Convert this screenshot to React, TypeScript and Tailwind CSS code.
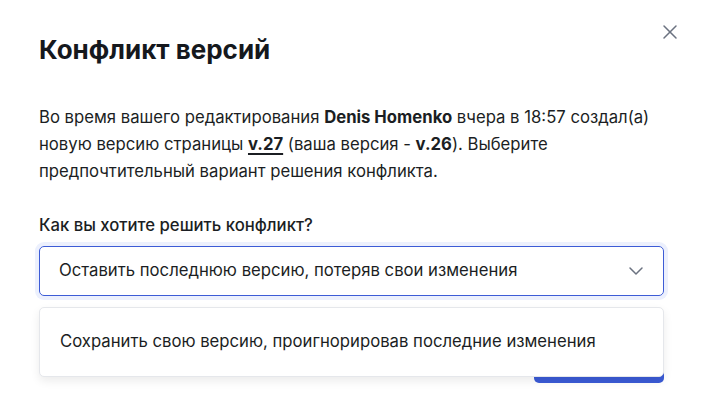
import * as React from "react"
import { X, ChevronDown } from "lucide-react"

export default function App() {
  return (
    <div className="relative w-[706px] h-[414px] overflow-hidden bg-white font-['Inter',sans-serif] text-[#1b1e23]">
      <button type="button" className="absolute top-[20px] right-[24px] text-[#6b7280]">
        <X size={24} strokeWidth={1.5} />
      </button>

      <div className="pl-[39px] pr-[42px] pt-[34px]">
        {/* Header */}
        <h2 className="text-[26px] leading-[32px] font-bold text-[#15181d]">
          Конфликт версий
        </h2>

        {/* Description */}
        <p className="mt-[38px] text-[16.7px] leading-[27px]">
          Во время вашего редактирования <b className="font-bold">Denis Homenko</b> вчера в 18:57 создал(а)
          <br />
          новую версию страницы <b className="font-bold underline decoration-[1.5px] underline-offset-[3px]">v.27</b> (ваша версия - <b className="font-bold">v.26</b>). Выберите
          <br />
          предпочтительный вариант решения конфликта.
        </p>

        {/* Select */}
        <div className="mt-[28px]">
          <label className="block text-[16.7px] leading-[24px] font-medium">Как вы хотите решить конфликт?</label>
          <div className="relative mt-[9px]">
            <div className="flex items-center justify-between h-[50px] pl-[19px] pr-[15px] rounded-[5px] border border-[#3d5cd6] ring-[4px] ring-[#ecf0fd]">
              <span className="text-[16.7px]">Оставить последнюю версию, потеряв свои изменения</span>
              <ChevronDown size={24} strokeWidth={1.5} className="text-[#6b7280]" />
            </div>

            {/* Dropdown */}
            <div className="absolute z-10 left-0 right-0 top-[61px] h-[70px] flex items-center pl-[20px] rounded-[5px] border border-[#e5e7eb] bg-white shadow-[0_4px_10px_rgba(0,0,0,0.08)]">
              <span className="text-[16.7px]">Сохранить свою версию, проигнорировав последние изменения</span>
            </div>
          </div>
        </div>

        {/* Footer */}
        <div className="mt-[47px] flex justify-end">
          <button type="button" className="h-[40px] w-[130px] rounded-[5px] bg-[#3b5bd6] text-white text-[16px] font-medium">Применить</button>
        </div>
      </div>
    </div>
  )
}
